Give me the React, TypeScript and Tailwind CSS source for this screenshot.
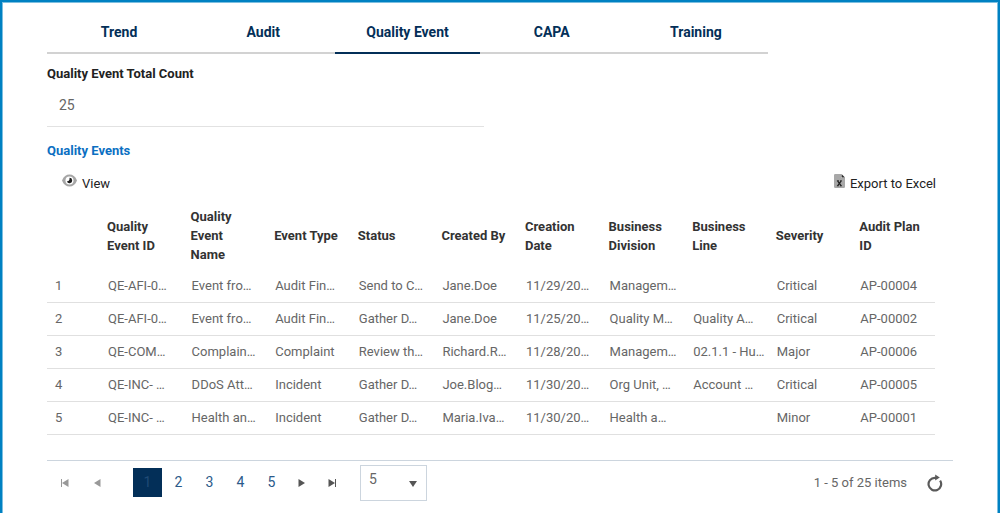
import { useState } from "react";
import clsx from "clsx";

const TABS = ["Trend", "Audit", "Quality Event", "CAPA", "Training"];

const COLUMNS = [
  "Quality Event ID",
  "Quality Event Name",
  "Event Type",
  "Status",
  "Created By",
  "Creation Date",
  "Business Division",
  "Business Line",
  "Severity",
  "Audit Plan ID",
];

const ROWS = [
  ["QE-AFI-0…", "Event fro…", "Audit Fin…", "Send to C…", "Jane.Doe", "11/29/20…", "Managem…", "", "Critical", "AP-00004"],
  ["QE-AFI-0…", "Event fro…", "Audit Fin…", "Gather D…", "Jane.Doe", "11/25/20…", "Quality M…", "Quality A…", "Critical", "AP-00002"],
  ["QE-COM…", "Complain…", "Complaint", "Review th…", "Richard.R…", "11/28/20…", "Managem…", "02.1.1 - Hu…", "Major", "AP-00006"],
  ["QE-INC- …", "DDoS Att…", "Incident", "Gather D…", "Joe.Blog…", "11/30/20…", "Org Unit, …", "Account …", "Critical", "AP-00005"],
  ["QE-INC- …", "Health an…", "Incident", "Gather D…", "Maria.Iva…", "11/30/20…", "Health a…", "", "Minor", "AP-00001"],
];

const PAGES = [1, 2, 3, 4, 5];

function EyeIcon() {
  return (
    <svg width="15" height="13" viewBox="0 0 15 13" aria-hidden="true">
      <path d="M0 6.5C1.6 2.4 4.3.5 7.5.5s5.900 1.900 7.500 6c-1.600 4.100-4.300 6-7.500 6S1.600 10.600 0 6.500z" fill="#a6a6a6" />
      <circle cx="7.500" cy="6.500" r="4" fill="#fff" />
      <path d="M7.500 3.800a2.700 2.700 0 1 1-2.600 3.400c1.600.5 3-.8 2.600-3.400z" fill="#1c1c1c" />
    </svg>
  );
}

function ExcelIcon() {
  return (
    <svg width="11" height="14" viewBox="0 0 11 14" aria-hidden="true">
      <path d="M1.200 0H7v3.800h4v9a1.200 1.200 0 0 1-1.200 1.200H1.200A1.200 1.200 0 0 1 0 12.800V1.200A1.200 1.200 0 0 1 1.200 0z" fill="#a8a8a8" />
      <path d="M7.500 0 11 3.400H7.500z" fill="#2b2b2b" />
      <path d="M3.600 6.800l3.600 5M7.200 6.800l-3.600 5" stroke="#222" strokeWidth="1.300" />
      <path d="M2.900 6.700h2M6.200 6.700h1.700M2.900 11.800h1.700M5.900 11.800h2" stroke="#222" strokeWidth=".8" />
    </svg>
  );
}

function ReloadIcon() {
  return (
    <svg width="16" height="18" viewBox="0 0 16 18" fill="none" aria-hidden="true">
      <path d="M9 3.800H7.800a6.300 6.300 0 1 0 5.300 2.800" stroke="#5a5a5a" strokeWidth="2.200" />
      <path d="M8.200.6v6L12.800 3.500z" fill="#5a5a5a" />
    </svg>
  );
}

type ArrowProps = { back?: boolean; bar?: boolean };

function ArrowIcon({ back, bar }: ArrowProps) {
  return (
    <svg width="8" height="8" viewBox="0 0 8 8" fill="currentColor" className={clsx(back && "rotate-180")} aria-hidden="true">
      <path d="M.5 0l6.500 4L.5 8z" />
      {bar && <path d="M7 0h1v8H7z" />}
    </svg>
  );
}

export default function App() {
  const [tab, setTab] = useState("Quality Event");
  const [page, setPage] = useState(1);

  return (
    <div className="min-h-screen border-x-2 border-t-2 border-[#0081c2] bg-white font-['Roboto',sans-serif] text-[13px] text-[#666]">
      <div className="min-h-screen border-x border-t border-[#7cbfe0] px-11">
        {/* Tabs */}
        <div role="tablist" className="grid w-full max-w-[721px] grid-cols-5 pt-2">
          {TABS.map((name) => (
            <button
              key={name}
              role="tab"
              aria-selected={tab === name}
              onClick={() => setTab(name)}
              className={clsx(
                "h-[43px] border-b-2 text-center text-sm font-bold text-[#032f58]",
                tab === name ? "border-[#032f58]" : "border-[#d2d2d2]",
              )}
            >
              {name}
            </button>
          ))}
        </div>

        {/* Total count */}
        <div className="w-[437px] max-w-full pt-2.5">
          <label htmlFor="total" className="block leading-5 font-bold text-[#222]">
            Quality Event Total Count
          </label>
          <input id="total" readOnly value="25" className="h-[43px] w-full border-b border-[#e2e2e2] px-3 text-sm outline-none" />
        </div>

        {/* Events grid */}
        <h2 className="mt-3.5 leading-5 font-bold text-[#0b6fc2]">Quality Events</h2>
        <div className="mt-[13px] flex justify-between pr-[17px] pl-[15px] leading-5 text-[#222]">
          <button className="flex gap-[5px]">
            <EyeIcon />
            View
          </button>
          <button className="flex gap-[5px]">
            <ExcelIcon />
            Export to Excel
          </button>
        </div>

        <div className="pr-[18px]">
          <table className="mt-2 w-full table-fixed border-collapse">
            <thead>
              <tr className="h-[67px] text-left leading-[19px] text-[#333]">
                <th className="w-[52px]" aria-label="Row" />
                {COLUMNS.map((name) => (
                  <th key={name} className="pr-2 pl-2 font-bold">
                    {name}
                  </th>
                ))}
              </tr>
            </thead>
            <tbody>
              {ROWS.map((row, i) => (
                <tr key={i} className="h-[33px] border-b border-[#e0e0e0] whitespace-nowrap">
                  <td className="pl-2">{i + 1}</td>
                  {row.map((cell, j) => (
                    <td key={j} className="pl-[9px]">
                      {cell}
                    </td>
                  ))}
                </tr>
              ))}
            </tbody>
          </table>
        </div>

        {/* Pager */}
        <div className="mt-[25px] flex items-start justify-between border-t border-[#ccd5de] pt-1">
          <div className="flex items-start">
            <div className="flex h-9 items-center text-[#999]">
              <button aria-label="First page" className="flex w-9 justify-center" onClick={() => setPage(1)}>
                <ArrowIcon back bar />
              </button>
              <button aria-label="Previous page" className="mr-[22px] flex w-7 justify-center" onClick={() => setPage(Math.max(1, page - 1))}>
                <ArrowIcon back />
              </button>
            </div>
            {PAGES.map((n) => (
              <button
                key={n}
                onClick={() => setPage(n)}
                className={clsx(
                  "mt-[3px] mr-0.5 h-[29px] w-[29px] text-sm",
                  page === n ? "bg-[#032f58] text-[#1f4a75]" : "text-[#2b5a8a]",
                )}
              >
                {n}
              </button>
            ))}
            <div className="flex h-9 items-center text-[#555]">
              <button aria-label="Next page" className="flex w-7 justify-center" onClick={() => setPage(Math.min(5, page + 1))}>
                <ArrowIcon />
              </button>
              <button aria-label="Last page" className="flex w-8 justify-center" onClick={() => setPage(5)}>
                <ArrowIcon bar />
              </button>
            </div>
            <div className="relative ml-3">
              <select aria-label="Items per page" className="h-9 w-[67px] appearance-none border border-[#ccd5de] pb-2 pl-2 text-sm outline-none">
                <option>5</option>
                <option>10</option>
                <option>20</option>
              </select>
              <svg width="8" height="6" viewBox="0 0 8 6" className="pointer-events-none absolute right-2.5 bottom-3.5" aria-hidden="true">
                <path d="M0 0h8L4 6z" fill="#555" />
              </svg>
            </div>
          </div>
          <div className="flex items-center gap-5 pt-2 pr-2.5">
            <span className="leading-5">1 - 5 of 25 items</span>
            <button aria-label="Refresh">
              <ReloadIcon />
            </button>
          </div>
        </div>
      </div>
    </div>
  );
}
